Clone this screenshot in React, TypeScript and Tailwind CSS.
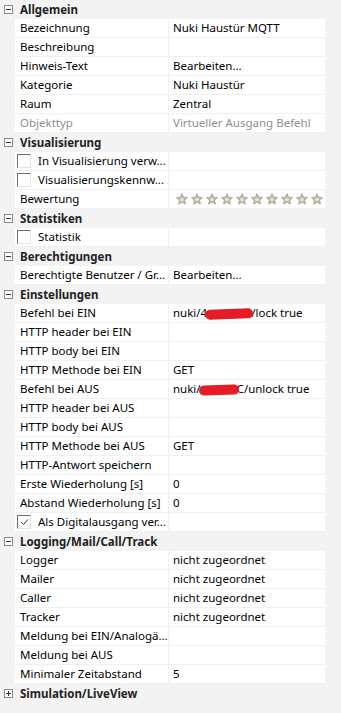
import React from 'react';

type Row = {
  label: string;
  value?: React.ReactNode;
  check?: 'on' | 'off';
  dim?: boolean;
  stars?: boolean;
};

type Section = {
  title: string;
  open: boolean;
  rows: Row[];
};

function Redacted({ width }: { width: string }) {
  return (
    <span className={`relative inline-block h-[10px] ${width} align-middle`}>
      <span className="absolute left-[-2px] right-[-2px] top-[0px] h-[10px] rounded-full bg-[#e51c23] -rotate-2" />
    </span>
  );
}

function Stars() {
  return (
    <div className="flex items-center gap-[1px] pl-[6px]">
      {Array.from({ length: 10 }).map((_, i) => (
        <svg key={i} width="14" height="14" viewBox="0 0 24 24">
          <path
            d="M12 2.5l2.9 6.3 6.9.7-5.2 4.6 1.5 6.8L12 17.4l-6.1 3.5 1.5-6.8-5.2-4.6 6.9-.7z"
            fill="#b8af9c"
            stroke="#a39a85"
            strokeWidth="1"
          />
          <path d="M12 8l1.5 3.3 3.5.3-2.7 2.3.8 3.4L12 15.5l-3.1 1.8.8-3.4L7 11.6l3.5-.3z" fill="#e9e5dc" />
        </svg>
      ))}
    </div>
  );
}

const sections: Section[] = [
  {
    title: 'Allgemein',
    open: true,
    rows: [
      { label: 'Bezeichnung', value: 'Nuki Haustür MQTT' },
      { label: 'Beschreibung' },
      { label: 'Hinweis-Text', value: 'Bearbeiten...' },
      { label: 'Kategorie', value: 'Nuki Haustür' },
      { label: 'Raum', value: 'Zentral' },
      { label: 'Objekttyp', value: 'Virtueller Ausgang Befehl', dim: true },
    ],
  },
  {
    title: 'Visualisierung',
    open: true,
    rows: [
      { label: 'In Visualisierung verw...', check: 'off' },
      { label: 'Visualisierungskennw...', check: 'off' },
      { label: 'Bewertung', stars: true },
    ],
  },
  {
    title: 'Statistiken',
    open: true,
    rows: [{ label: 'Statistik', check: 'off' }],
  },
  {
    title: 'Berechtigungen',
    open: true,
    rows: [{ label: 'Berechtigte Benutzer / Gr...', value: 'Bearbeiten...' }],
  },
  {
    title: 'Einstellungen',
    open: true,
    rows: [
      {
        label: 'Befehl bei EIN',
        value: (
          <>
            nuki/4<Redacted width="w-[44px]" />/lock true
          </>
        ),
      },
      { label: 'HTTP header bei EIN' },
      { label: 'HTTP body bei EIN' },
      { label: 'HTTP Methode bei EIN', value: 'GET' },
      {
        label: 'Befehl bei AUS',
        value: (
          <>
            nuki/<Redacted width="w-[36px]" />C/unlock true
          </>
        ),
      },
      { label: 'HTTP header bei AUS' },
      { label: 'HTTP body bei AUS' },
      { label: 'HTTP Methode bei AUS', value: 'GET' },
      { label: 'HTTP-Antwort speichern' },
      { label: 'Erste Wiederholung [s]', value: '0' },
      { label: 'Abstand Wiederholung [s]', value: '0' },
      { label: 'Als Digitalausgang ver...', check: 'on' },
    ],
  },
  {
    title: 'Logging/Mail/Call/Track',
    open: true,
    rows: [
      { label: 'Logger', value: 'nicht zugeordnet' },
      { label: 'Mailer', value: 'nicht zugeordnet' },
      { label: 'Caller', value: 'nicht zugeordnet' },
      { label: 'Tracker', value: 'nicht zugeordnet' },
      { label: 'Meldung bei EIN/Analogä...' },
      { label: 'Meldung bei AUS' },
      { label: 'Minimaler Zeitabstand', value: '5' },
    ],
  },
  {
    title: 'Simulation/LiveView',
    open: false,
    rows: [],
  },
];

function ToggleBox({ open }: { open: boolean }) {
  return (
    <span className="relative block w-[9px] h-[9px] border border-[#8a8a8a] bg-white">
      <span className="absolute left-[1px] right-[1px] top-[3px] h-[1px] bg-[#333]" />
      {!open && <span className="absolute top-[1px] bottom-[1px] left-[3px] w-[1px] bg-[#333]" />}
    </span>
  );
}

function CheckBox({ on }: { on: boolean }) {
  return (
    <span className="flex items-center justify-center w-[14px] h-[14px] border-t border-l border-[#6e6e6e] border-r border-b border-r-[#e3e3e3] border-b-[#e3e3e3] bg-white">
      {on && (
        <svg width="9" height="8" viewBox="0 0 9 8">
          <path d="M1 4l2.5 2.5L8 1.5" fill="none" stroke="#333" strokeWidth="1" />
        </svg>
      )}
    </span>
  );
}

function PropRow({ row }: { row: Row }) {
  return (
    <div className="flex h-[19px] pl-[15px] pr-[16px]">
      <div className="flex flex-1 bg-white border-b border-[#f0f0f0]">
        <div className="flex items-center w-[154px] shrink-0 border-r border-[#f0f0f0] overflow-hidden">
          {row.check ? (
            <div className="flex items-center gap-[7px] pl-[2px]">
              <CheckBox on={row.check === 'on'} />
              <span className="whitespace-nowrap">{row.label}</span>
            </div>
          ) : (
            <span className={`pl-[5px] whitespace-nowrap ${row.dim ? 'text-[#8e8e8e]' : ''}`}>{row.label}</span>
          )}
        </div>
        <div className={`flex items-center flex-1 min-w-0 overflow-hidden ${row.dim ? 'text-[#8e8e8e]' : ''}`}>
          {row.stars ? <Stars /> : <span className="pl-[4px] whitespace-nowrap">{row.value}</span>}
        </div>
      </div>
    </div>
  );
}

export default function App() {
  return (
    <div
      className="w-[341px] h-[713px] bg-[#f3f3f3] text-[11.5px] text-black overflow-hidden"
      style={{ fontFamily: '"Noto Sans", "Open Sans", sans-serif' }}
    >
      {sections.map((s) => (
        <div key={s.title}>
          <div className="flex items-center h-[19px]">
            <div className="w-[15px] flex justify-center shrink-0 pl-[1px]">
              <ToggleBox open={s.open} />
            </div>
            <span className="pl-[5px] font-bold text-[#222]">{s.title}</span>
          </div>
          {s.open && s.rows.map((r) => <PropRow key={r.label} row={r} />)}
        </div>
      ))}
    </div>
  );
}
